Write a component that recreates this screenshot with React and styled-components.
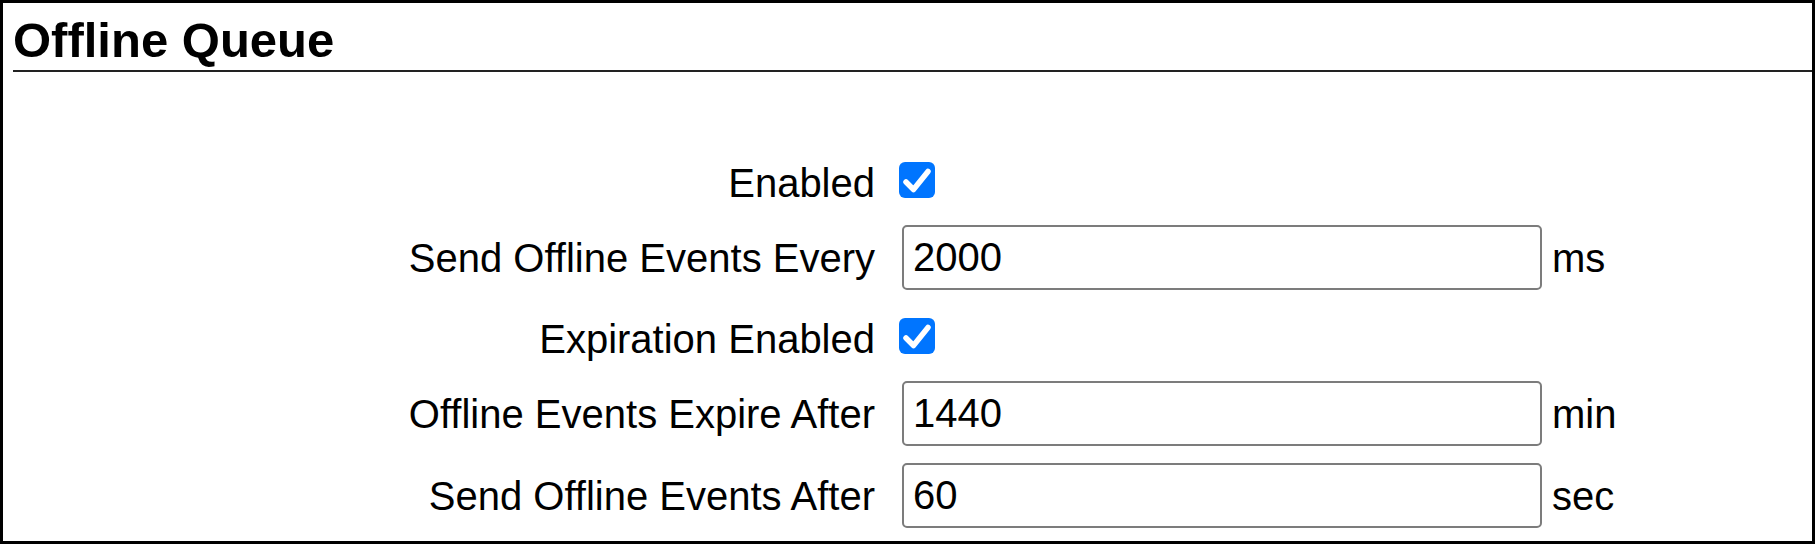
import React from "react";
import { styled, createGlobalStyle } from "styled-components";

const GlobalStyle = createGlobalStyle`
  html, body {
    margin: 0;
    padding: 0;
    background: #fff;
  }
  body {
    font-family: "Liberation Sans", Arial, sans-serif;
    color: #000;
  }
`;

const Frame = styled.div`
  width: 1815px;
  height: 544px;
  box-sizing: border-box;
  border: 3px solid #000;
  overflow: hidden;
  background: #fff;
`;

const Heading = styled.h2`
  margin: 10px 0 0 10px;
  padding: 0 0 2px;
  font-size: 49px;
  font-weight: 700;
  line-height: 55px;
  border-bottom: 2px solid #222;
`;

const Form = styled.div`
  display: grid;
  grid-template-columns: 886px 643px auto;
  row-gap: 17px;
  margin: 79px 0 0 10px;
`;

const Label = styled.div`
  box-sizing: border-box;
  padding: ${(p) => (p.$check ? "6px" : "0")} 24px 0 0;
  text-align: right;
  font-size: 40px;
  line-height: 46px;
  align-self: center;
  white-space: nowrap;
`;

const Control = styled.div`
  display: flex;
  align-items: center;
  height: ${(p) => (p.$check ? 57 : 65)}px;
`;

const CheckBox = styled.span`
  display: inline-flex;
  align-items: center;
  justify-content: center;
  width: 36px;
  height: 36px;
  border-radius: 6px;
  background: #0075ff;
`;

const TextInput = styled.input`
  box-sizing: border-box;
  width: 640px;
  height: 65px;
  margin: 0 0 0 3px;
  padding: 0 9px;
  border: 2px solid #7c7c7c;
  border-radius: 5px;
  background: #fff;
  font-family: "Liberation Sans", Arial, sans-serif;
  font-size: 40px;
  color: #000;
  outline: none;
`;

const Unit = styled.div`
  align-self: center;
  padding-left: 10px;
  font-size: 40px;
  line-height: 46px;
`;

const Check = () => (
  <CheckBox role="checkbox" aria-checked="true">
    <svg width="36" height="36" viewBox="0 0 36 36">
      <polyline
        points="7,20 14.5,27.5 29,9.5"
        fill="none"
        stroke="#fff"
        strokeWidth="5.5"
        strokeLinecap="round"
        strokeLinejoin="round"
      />
    </svg>
  </CheckBox>
);

const fields = [
  { label: "Enabled", type: "check" },
  { label: "Send Offline Events Every", value: "2000", unit: "ms" },
  { label: "Expiration Enabled", type: "check" },
  { label: "Offline Events Expire After", value: "1440", unit: "min" },
  { label: "Send Offline Events After", value: "60", unit: "sec" },
];

export default function App() {
  return (
    <>
      <GlobalStyle />
      <Frame>
        <Heading>Offline Queue</Heading>
        <Form>
          {fields.map((f) => {
            const isCheck = f.type === "check";
            return (
              <React.Fragment key={f.label}>
                <Label $check={isCheck}>{f.label}</Label>
                <Control $check={isCheck}>
                  {isCheck ? (
                    <Check />
                  ) : (
                    <TextInput type="text" defaultValue={f.value} readOnly />
                  )}
                </Control>
                <Unit>{f.unit || ""}</Unit>
              </React.Fragment>
            );
          })}
        </Form>
      </Frame>
    </>
  );
}
